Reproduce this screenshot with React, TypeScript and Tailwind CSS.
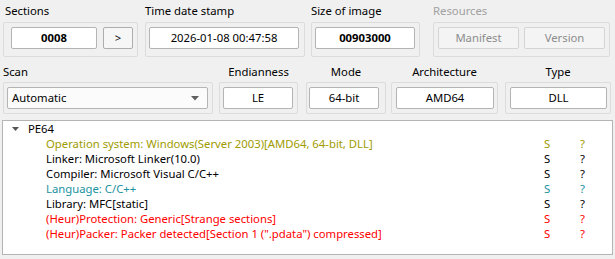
import React from "react";

const font = { fontFamily: '"Noto Sans", "Open Sans", sans-serif' };

function Box({ children, className = "" }: { children: React.ReactNode; className?: string }) {
  return (
    <div
      className={
        "h-[22px] bg-white border border-[#b4b4b4] rounded-[2px] flex items-center justify-center text-[11.3px] text-black " +
        className
      }
    >
      {children}
    </div>
  );
}

const rows: { text: string; color: string }[] = [
  { text: "Operation system: Windows(Server 2003)[AMD64, 64-bit, DLL]", color: "text-[#a09b00]" },
  { text: "Linker: Microsoft Linker(10.0)", color: "text-black" },
  { text: "Compiler: Microsoft Visual C/C++", color: "text-black" },
  { text: "Language: C/C++", color: "text-[#1a92a0]" },
  { text: "Library: MFC[static]", color: "text-black" },
  { text: "(Heur)Protection: Generic[Strange sections]", color: "text-[#ff0000]" },
  { text: "(Heur)Packer: Packer detected[Section 1 (\".pdata\") compressed]", color: "text-[#ff0000]" },
];

export default function App() {
  return (
    <div className="w-[615px] h-[259px] bg-[#f0f0f0] text-[11.3px] text-black overflow-hidden" style={font}>
      {/* Row 1 */}
      <div className="flex pl-[3px] pt-0">
        <div className="w-[135px] flex flex-col">
          <div className="h-[22px] pl-[2px] leading-[22px]">Sections</div>
          <div className="h-[35px] border border-[#dcdcdc] rounded-[2px] flex items-start pt-[4px] pl-[7px]">
            <Box className="w-[86px] font-bold">0008</Box>
            <button className="ml-[6px] w-[30px] h-[22px] border border-[#adadad] rounded-[2px] bg-[#f6f6f6] text-[11.3px] flex items-center justify-center">
              &gt;
            </button>
          </div>
        </div>
        <div className="ml-[7px] w-[160px] flex flex-col">
          <div className="h-[22px] leading-[22px]">Time date stamp</div>
          <div className="h-[35px] border border-[#dcdcdc] rounded-[2px] flex items-start pt-[4px] pl-[3px]">
            <Box className="w-[150px]">2026-01-08 00:47:58</Box>
          </div>
        </div>
        <div className="ml-[6px] w-[109px] flex flex-col">
          <div className="h-[22px] leading-[22px]">Size of image</div>
          <div className="h-[35px] border border-[#dcdcdc] rounded-[2px] flex items-start pt-[4px] pl-[3px]">
            <Box className="w-[100px] font-bold">00903000</Box>
          </div>
        </div>
        <div className="ml-[13px] w-[177px] flex flex-col">
          <div className="h-[22px] leading-[22px] text-[#a0a0a0]">Resources</div>
          <div className="h-[35px] border border-[#dcdcdc] rounded-[2px] flex items-start pt-[4px] pl-[4px] gap-[5px]">
            <div className="w-[81px] h-[22px] border border-[#d4d4d4] rounded-[2px] bg-[#f4f4f4] text-[#8c8c8c] flex items-center justify-center">
              Manifest
            </div>
            <div className="w-[81px] h-[22px] border border-[#d4d4d4] rounded-[2px] bg-[#f4f4f4] text-[#8c8c8c] flex items-center justify-center">
              Version
            </div>
          </div>
        </div>
      </div>

      {/* Row 2 */}
      <div className="flex pl-[3px] mt-[3px]">
        <div className="w-[210px] flex flex-col">
          <div className="h-[22px] leading-[24px]">Scan</div>
          <div className="h-[32px] border border-[#dcdcdc] rounded-[2px] flex items-start pt-[4px] pl-[3px]">
            <div className="w-[201px] h-[22px] bg-[#fbfbfb] border border-[#b4b4b4] rounded-[2px] flex items-center justify-between pl-[4px] pr-[8px]">
              <span>Automatic</span>
              <svg width="8" height="5" viewBox="0 0 8 5">
                <path d="M0 0 L8 0 L4 4.5 Z" fill="#606060" />
              </svg>
            </div>
          </div>
        </div>
        <div className="ml-[6px] w-[79px] flex flex-col">
          <div className="h-[22px] leading-[24px] text-center">Endianness</div>
          <div className="h-[32px] border border-[#dcdcdc] rounded-[2px] flex items-start pt-[4px] pl-[3px]">
            <Box className="w-[70px]">LE</Box>
          </div>
        </div>
        <div className="ml-[8px] w-[80px] flex flex-col">
          <div className="h-[22px] leading-[24px] text-center">Mode</div>
          <div className="h-[32px] border border-[#dcdcdc] rounded-[2px] flex items-start pt-[4px] pl-[2px]">
            <Box className="w-[70px]">64-bit</Box>
          </div>
        </div>
        <div className="ml-[5px] w-[107px] flex flex-col">
          <div className="h-[22px] leading-[24px] text-center">Architecture</div>
          <div className="h-[32px] border border-[#dcdcdc] rounded-[2px] flex items-start pt-[4px] pl-[4px]">
            <Box className="w-[98px]">AMD64</Box>
          </div>
        </div>
        <div className="ml-[7px] w-[106px] flex flex-col">
          <div className="h-[22px] leading-[24px] text-center">Type</div>
          <div className="h-[32px] border border-[#dcdcdc] rounded-[2px] flex items-start pt-[4px] pl-[4px]">
            <Box className="w-[97px]">DLL</Box>
          </div>
        </div>
      </div>

      {/* Tree */}
      <div className="ml-[2px] mt-[6px] w-[611px] h-[135px] bg-white border border-[#b4b4b4] pt-[0px]">
        <div className="h-[15px] flex items-center leading-[15px]">
          <svg className="ml-[9px]" width="7" height="4" viewBox="0 0 7 4">
            <path d="M0 0 L7 0 L3.5 4 Z" fill="#555" />
          </svg>
          <span className="ml-[9px]">PE64</span>
        </div>
        {rows.map((r, i) => (
          <div key={i} className={"h-[15px] flex items-center leading-[15px] " + r.color}>
            <span className="ml-[43px] w-[498px] whitespace-nowrap">{r.text}</span>
            <span className="w-[36px]">S</span>
            <span>?</span>
          </div>
        ))}
      </div>
    </div>
  );
}
